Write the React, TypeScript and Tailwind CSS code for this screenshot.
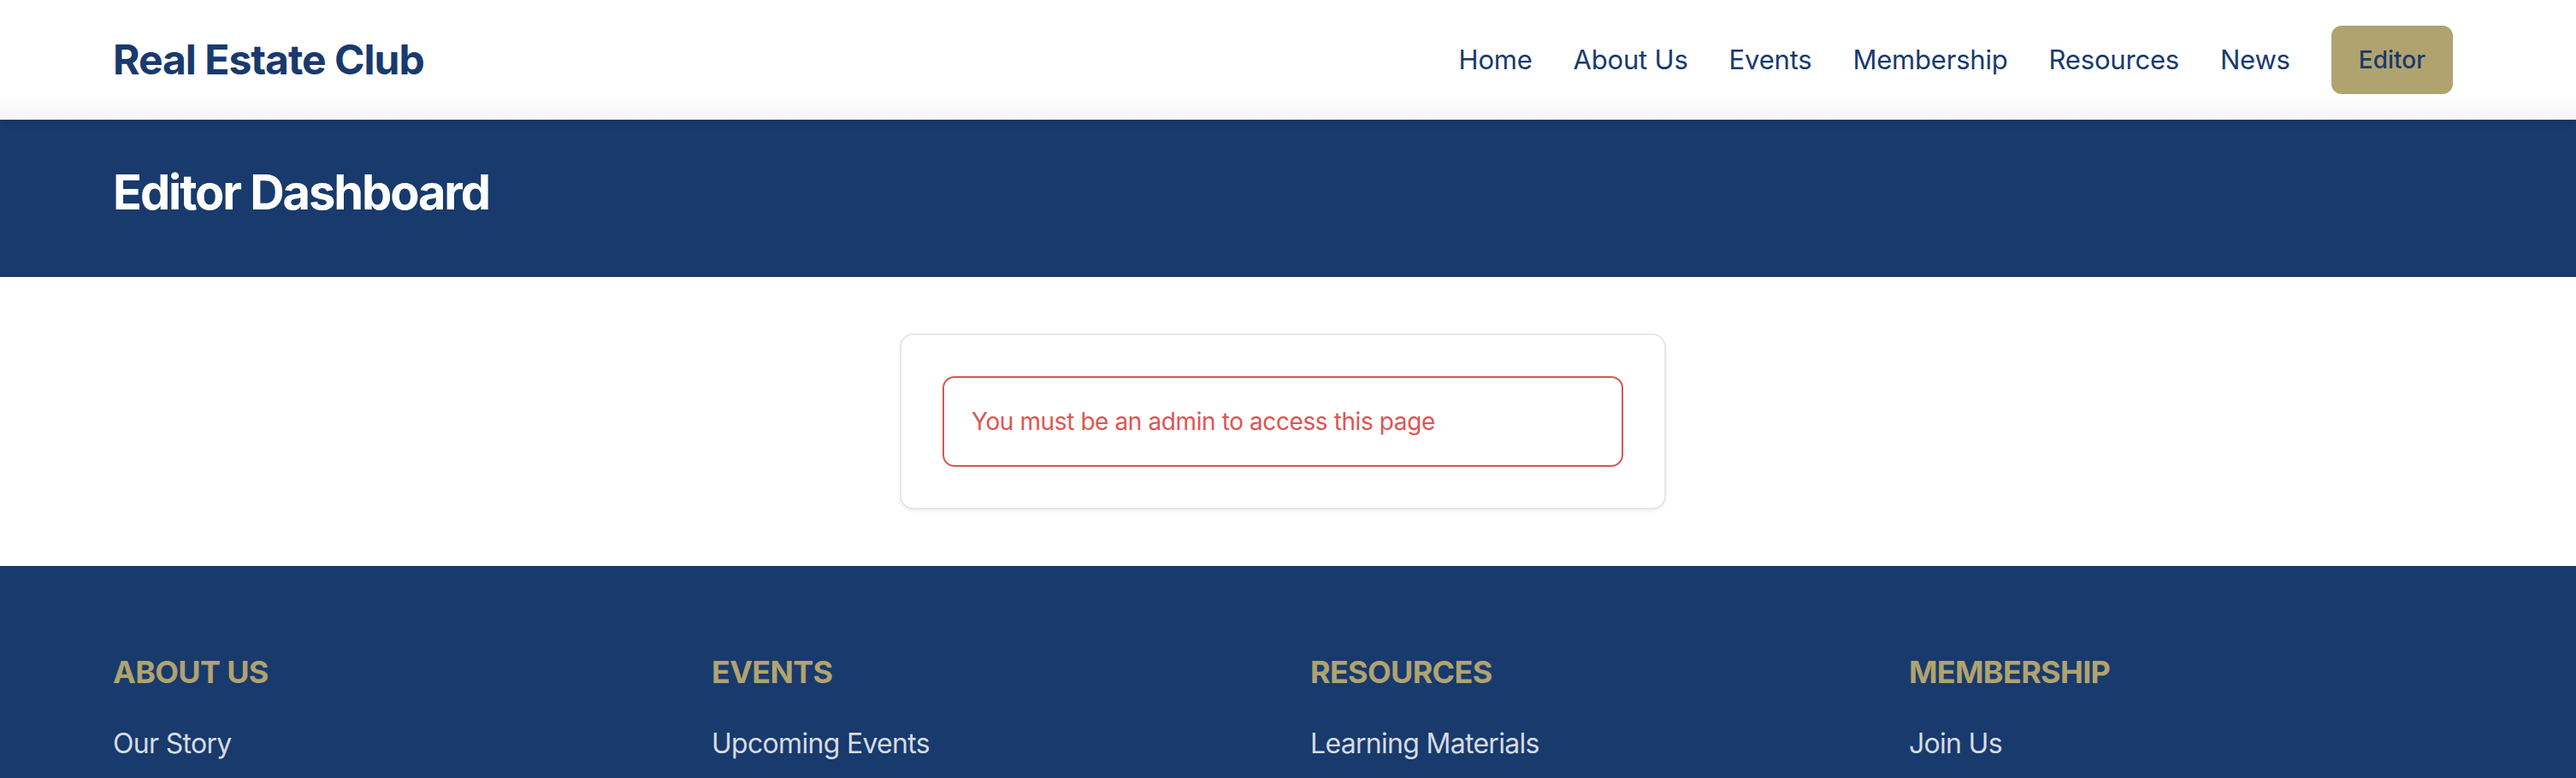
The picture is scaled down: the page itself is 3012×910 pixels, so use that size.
import React from "react";

const navItems = ["Home", "About Us", "Events", "Membership", "Resources", "News"];

const footerCols = [
  { title: "ABOUT US", links: ["Our Story"] },
  { title: "EVENTS", links: ["Upcoming Events"] },
  { title: "RESOURCES", links: ["Learning Materials"] },
  { title: "MEMBERSHIP", links: ["Join Us"] },
];

export default function App() {
  return (
    <div className="min-h-screen bg-white font-['Inter','Liberation_Sans',sans-serif] overflow-hidden">
      <header className="relative z-10 h-[140px] bg-[linear-gradient(to_bottom,#ffffff_78%,#f3f4f6)] shadow-[0_3px_10px_rgba(0,0,0,0.12)]">
        <div className="h-full pl-[132px] pr-[144px] flex items-center justify-between">
          <div className="text-[48px] leading-[64px] font-bold text-[#183a6d] tracking-[-1px]">
            Real Estate Club
          </div>
          <nav className="flex items-center gap-[48px]">
            {navItems.map((n) => (
              <span key={n} className="text-[31px] leading-[48px] text-[#183a6d] tracking-[-0.2px]">
                {n}
              </span>
            ))}
            <span className="h-[80px] px-[32px] flex items-center rounded-[12px] bg-[#b0a370] text-[28px] leading-[40px] font-medium text-[#183a6d]">
              Editor
            </span>
          </nav>
        </div>
      </header>

      <section className="h-[184px] bg-[#183a6d] pl-[132px] pr-[144px] flex items-center">
        <h1 className="text-[56px] leading-[72px] font-bold text-white tracking-[-2.1px] -mt-[14px]">
          Editor Dashboard
        </h1>
      </section>

      <main className="pt-[66px] pb-[66px] pl-[132px] pr-[144px]">
        <div className="mx-auto w-[896px] rounded-[16px] border-2 border-[#e5e7eb] bg-white p-[48px] shadow-[0_2px_4px_rgba(0,0,0,0.06)]">
          <div className="rounded-[14px] border-2 border-[#e05450] px-[32px] py-[31px]">
            <p className="text-[28px] leading-[40px] text-[#e05450] tracking-[-0.4px]">
              You must be an admin to access this page
            </p>
          </div>
        </div>
      </main>

      <footer className="bg-[#183a6d] pt-[96px] pb-[96px] pl-[132px] pr-[144px]">
        <div className="grid grid-cols-4 gap-[64px]">
          {footerCols.map((c) => (
            <div key={c.title}>
              <h3 className="text-[36px] leading-[56px] font-bold text-[#b0a370] mb-[32px] tracking-[-0.7px]">
                {c.title}
              </h3>
              <ul className="flex flex-col gap-[16px]">
                {c.links.map((l) => (
                  <li key={l} className="text-[32px] leading-[48px] text-[#d7dbe3] tracking-[-0.7px]">
                    {l}
                  </li>
                ))}
              </ul>
            </div>
          ))}
        </div>
      </footer>
    </div>
  );
}
